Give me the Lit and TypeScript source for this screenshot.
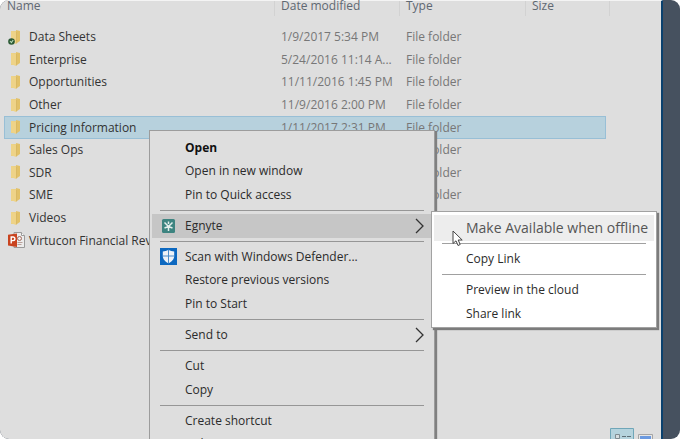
import { LitElement, html, css, svg, nothing } from "lit";
import { customElement, property, state } from "lit/decorators.js";
import { classMap } from "lit/directives/class-map.js";

type Entry = { name: string; date?: string; type?: string; icon: "folder" | "synced" | "deck" };
type MenuItem = { label: string; icon?: "egnyte" | "defender"; sub?: boolean; bold?: boolean };

const ENTRIES: Entry[] = [
  { name: "Data Sheets", date: "1/9/2017 5:34 PM", type: "File folder", icon: "synced" },
  { name: "Enterprise", date: "5/24/2016 11:14 A...", type: "File folder", icon: "folder" },
  { name: "Opportunities", date: "11/11/2016 1:45 PM", type: "File folder", icon: "folder" },
  { name: "Other", date: "11/9/2016 2:00 PM", type: "File folder", icon: "folder" },
  { name: "Pricing Information", date: "1/11/2017 2:31 PM", type: "File folder", icon: "folder" },
  { name: "Sales Ops", type: "File folder", icon: "folder" },
  { name: "SDR", type: "File folder", icon: "folder" },
  { name: "SME", type: "File folder", icon: "folder" },
  { name: "Videos", icon: "folder" },
  { name: "Virtucon Financial Rev", icon: "deck" },
];

const MENU: (MenuItem | null)[] = [
  { label: "Open", bold: true },
  { label: "Open in new window" },
  { label: "Pin to Quick access" },
  null,
  { label: "Egnyte", icon: "egnyte", sub: true },
  null,
  { label: "Scan with Windows Defender...", icon: "defender" },
  { label: "Restore previous versions" },
  { label: "Pin to Start" },
  null,
  { label: "Send to", sub: true },
  null,
  { label: "Cut" },
  { label: "Copy" },
  null,
  { label: "Create shortcut" },
  { label: "Delete" },
];

const folderShape = svg`
  <path d="M4 2h6v12H4z" fill="#e9cf86"/>
  <path d="M9 1l4 1v10l-3 2z" fill="#e2c168"/>
  <path d="M4 2l5 1v12l-5-2z" fill="#eed388"/>
  <path d="M9 3h1v11l-1 1z" fill="#d9b965"/>`;

@customElement("file-icon")
class FileIcon extends LitElement {
  @property() kind = "folder";
  static styles = css`
    :host { display: block; width: 18px; height: 17px; }
    svg { display: block; }
  `;
  render() {
    if (this.kind === "deck")
      return html`<svg width="18" height="17" viewBox="0 0 18 17" aria-hidden="true">
        <path d="M6 .5h7.500l3 3V15.500H6z" fill="#ececec" stroke="#9a9a9a"/>
        <path d="M13.500.5v3h3" fill="#fff" stroke="#9a9a9a"/>
        <circle cx="11.500" cy="6.500" r="2" fill="none" stroke="#a46a5c"/>
        <path d="M9.500 10.500h5M9.500 12.500h4" stroke="#b9a09a"/>
        <path d="M0 2.800L9 1.500v13.500L0 13.500z" fill="#c9431f"/>
        <path d="M3.200 11.500V5h1.900a1.700 1.700 0 010 3.600H3.400" fill="none" stroke="#fff" stroke-width="1.400"/>
      </svg>`;
    return html`<svg width="18" height="17" viewBox="0 0 18 17" aria-hidden="true">
      <g transform="translate(-1 0)">${folderShape}</g>
      ${this.kind === "synced"
        ? svg`<circle cx="3.500" cy="12.500" r="3.300" fill="#2c5a35"/>
            <path d="M2 12l1.400 1.600L5.200 11" fill="none" stroke="#b9dcb8" stroke-width="1.100"/>`
        : nothing}
    </svg>`;
  }
}

@customElement("context-menu")
class ContextMenu extends LitElement {
  @property({ attribute: false }) items: (MenuItem | null)[] = [];
  @state() private open = "Egnyte";

  static styles = css`
    :host { display: block; }
    .menu {
      display: flex; flex-direction: column; box-sizing: border-box;
      height: 328px; margin: 0; padding: 5px 2px 1px; list-style: none;
      background: #dedede; border: 1px solid #9c9c9c;
      box-shadow: 2px 2px 1px #808080;
    }
    .row { flex: 47 1 0; min-height: 0; display: flex; }
    .rule { flex: 15 1 0; min-height: 0; display: flex; align-items: center; padding: 0 8px; }
    .rule::before { content: ""; flex: 1; height: 1px; background: #969696; }
    .item {
      flex: 1; display: grid; grid-template-columns: 25px 1fr 12px; align-items: center;
      padding: 0 6px 0 8px; border: 0; background: none; color: #2b2b2b;
      font: inherit; line-height: 20px; text-align: left; white-space: nowrap;
    }
    .item.bold { font-weight: 700; color: #111; }
    .item.open { background: #c6c6c6; }
    .icon { display: flex; }
    svg { display: block; }
  `;

  private icon(kind?: string) {
    if (kind === "egnyte")
      return html`<svg width="17" height="14" viewBox="0 0 17 14" aria-hidden="true">
        <rect x="2" width="13" height="14" rx="1.500" fill="#3d8480"/>
        <path d="M8.500 12V7.500M8.500 7.500L4.500 3.500M8.500 7.500l4-4M8.500 5V2.500M4.500 9L8.500 7.500L12.500 9" fill="none" stroke="#e4efed" stroke-width="1.500"/>
      </svg>`;
    if (kind === "defender")
      return html`<svg width="17" height="17" viewBox="0 0 17 17" aria-hidden="true">
        <path d="M0 0h17v17H0z" fill="#0c68c0"/>
        <path d="M8.500 1.800c1.800 1.200 3.800 1.600 5.700 1.600v4.600c0 3.400-2.600 5.800-5.700 7.300C5.400 13.800 2.800 11.400 2.800 8V3.400c1.900 0 3.900-.4 5.700-1.600z" fill="#eef3f8"/>
        <path d="M8.500 2v13M3 8h11" stroke="#4d8ecb" stroke-width="1"/>
      </svg>`;
    return nothing;
  }

  render() {
    return html`<ul class="menu" role="menu" aria-label="Folder actions">
      ${this.items.map((it) =>
        it === null
          ? html`<li class="rule" role="separator"></li>`
          : html`<li class="row" role="none">
              <button type="button" role="menuitem"
                class=${classMap({ item: true, bold: !!it.bold, open: this.open === it.label })}
                @click=${() => { if (it.sub) this.open = it.label; }}>
                <span class="icon">${this.icon(it.icon)}</span>
                <span>${it.label}</span>
                ${it.sub
                  ? html`<svg width="12" height="16" viewBox="0 0 12 16" aria-hidden="true">
                      <path d="M2 1l7 7-7 7" fill="none" stroke="#333" stroke-width="1.300"/></svg>`
                  : nothing}
              </button>
            </li>`
      )}
    </ul>`;
  }
}

@customElement("sub-menu")
class SubMenu extends LitElement {
  static styles = css`
    :host { display: block; }
    .menu {
      margin: 0; padding: 3px 2px 1px; list-style: none; background: #fff;
      border: 1px solid #a2a2a2; box-shadow: 2px 2px 1px #7c7c7c;
    }
    .item {
      display: block; width: 100%; height: 24px; padding: 0 8px 0 32px; border: 0;
      background: none; color: #2b2b2b; font: inherit; line-height: 24px;
      text-align: left; white-space: nowrap;
    }
    .item.hot { height: 26px; line-height: 26px; font-size: 14px; color: #555; background: #ededed; }
    .rule { height: 1px; margin: 3px 8px; background: #a0a0a0; }
    .hot + .rule, .first + .rule { margin-top: 2px; }
  `;
  render() {
    return html`<ul class="menu" role="menu" aria-label="Egnyte">
      <li class="first" role="none"><button type="button" role="menuitem" class="item hot">Make Available when offline</button></li>
      <li class="rule" role="separator"></li>
      <li role="none"><button type="button" role="menuitem" class="item">Copy Link</button></li>
      <li class="rule" role="separator"></li>
      <li role="none"><button type="button" role="menuitem" class="item">Preview in the cloud</button></li>
      <li role="none"><button type="button" role="menuitem" class="item">Share link</button></li>
    </ul>`;
  }
}

@customElement("app-root")
class AppRoot extends LitElement {
  @state() private selected = "Pricing Information";

  static styles = css`
    :host {
      display: block; height: 100vh; overflow: hidden; background: #fff;
      font: 12px/20px "Open Sans", "Noto Sans", sans-serif;
    }
    .desktop {
      position: relative; display: flex; box-sizing: border-box; height: 100%;
      padding-right: 17px; overflow: hidden; border-radius: 9px; background: #46515f;
    }
    .window {
      flex: 1; display: flex; flex-direction: column; justify-content: space-between;
      min-width: 0; box-sizing: border-box; padding-left: 4px; background: #dedede;
      border-top: 1px solid #f4f4f4; border-right: 2px solid #0b416e;
    }
    .files {
      width: 602px; height: 251px; table-layout: fixed; border-collapse: collapse;
      text-align: left; color: #777;
    }
    .c-name { width: 270px; }
    .c-date { width: 125px; }
    .c-type { width: 126px; }
    th { height: 25px; padding: 0; vertical-align: top; font-weight: 400; color: #5f6872; }
    .head { display: block; height: 15px; line-height: 9px; border-left: 1px solid #d2d2d2; padding-left: 6px; }
    .head.first { border-left: 0; padding-left: 3px; }
    .head.last { border-right: 1px solid #d2d2d2; margin-right: -4px; }
    td { padding: 0 0 0 7px; white-space: nowrap; line-height: 20px; }
    .name { display: flex; align-items: center; gap: 3px; padding-left: 4px; color: #333; }
    td.first { padding-left: 0; }
    tr.selected { background: #b7d1dd; outline: 1px solid #98bfd6; outline-offset: -1px; }
    .views { display: flex; align-items: flex-end; gap: 4px; padding-right: 8px; height: 11px; align-self: flex-end; }
    .view { display: block; padding: 0; border: 0; background: none; }
    .view svg { display: block; }
    .context { position: absolute; left: 149px; top: 130px; width: 286px; }
    .sub { position: absolute; left: 431px; top: 211px; width: 226px; }
    .pointer { position: absolute; left: 452px; top: 230px; }
  `;

  render() {
    return html`<main class="desktop">
      <section class="window">
        <table class="files">
          <colgroup><col class="c-name"><col class="c-date"><col class="c-type"><col></colgroup>
          <thead><tr>
            <th scope="col"><span class="head first">Name</span></th>
            <th scope="col"><span class="head">Date modified</span></th>
            <th scope="col"><span class="head">Type</span></th>
            <th scope="col"><span class="head last">Size</span></th>
          </tr></thead>
          <tbody>
            ${ENTRIES.map((e) => html`
              <tr class=${classMap({ selected: e.name === this.selected })} @click=${() => (this.selected = e.name)}>
                <td class="first"><span class="name"><file-icon kind=${e.icon}></file-icon>${e.name}</span></td>
                <td>${e.date}</td><td>${e.type}</td><td></td>
              </tr>`)}
          </tbody>
        </table>
        <div class="views">
          <button type="button" class="view" aria-label="Details view">
            <svg width="24" height="11" viewBox="0 0 24 11">
              <path d="M.5 12V.5h23V12" fill="#b5d3dd" stroke="#6fa6b8"/>
              <path d="M5.500 6.500h4v4h-4z" fill="#d5dde0" stroke="#7f8b90"/>
              <path d="M12 8.500h4M17 8.500h4" stroke="#5f7078"/>
            </svg>
          </button>
          <button type="button" class="view" aria-label="Large icons view">
            <svg width="15" height="5" viewBox="0 0 15 5">
              <path d="M.5 6V.5h14V6" fill="#e6e6e6" stroke="#a5a5a5"/>
              <path d="M2 2h11v3H2z" fill="#6c9ae0"/>
            </svg>
          </button>
        </div>
      </section>
      <context-menu class="context" .items=${MENU}></context-menu>
      <sub-menu class="sub"></sub-menu>
      <svg class="pointer" width="12" height="17" viewBox="0 0 12 17" aria-hidden="true">
        <path d="M1 1v12.500l3-2.700 2 4.700 2.200-1-2-4.500h4z" fill="#fff" stroke="#444"/>
      </svg>
    </main>`;
  }
}
